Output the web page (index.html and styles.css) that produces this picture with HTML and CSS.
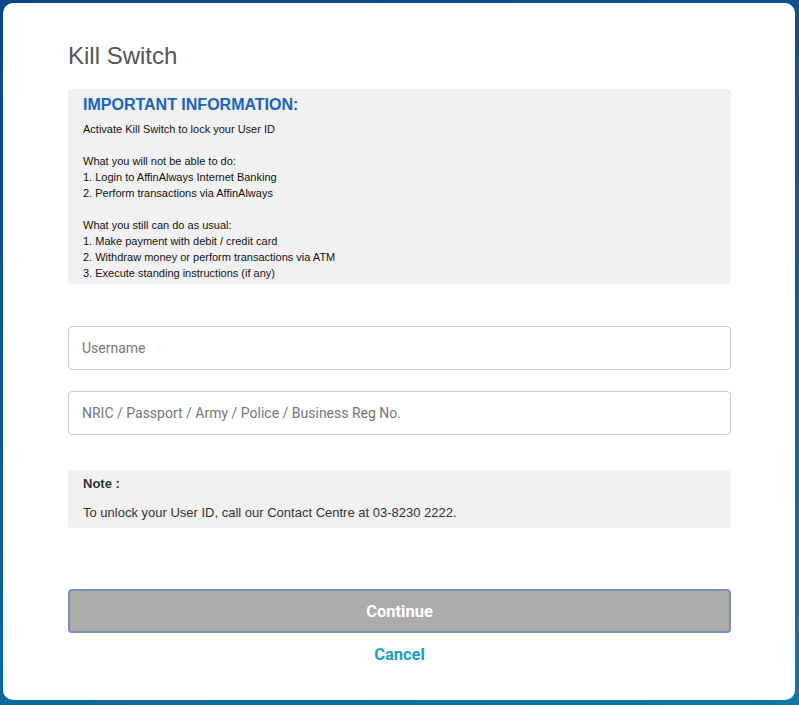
FILE: index.html
```html
<!DOCTYPE html>
<html lang="en">
<head>
  <meta charset="UTF-8" />
  <meta name="viewport" content="width=device-width, initial-scale=1.0"/>
  <title>Kill Switch</title>
  <link rel="stylesheet" href="styles.css">
</head>
<body>

<div class="modal">
  <h1>Kill Switch</h1>

  <div class="info">
    <h3>IMPORTANT INFORMATION:</h3>
    <p>Activate Kill Switch to lock your User ID</p>
    <p>What you will not be able to do:<br>
      1. Login to AffinAlways Internet Banking<br>
      2. Perform transactions via AffinAlways</p>
    <p>What you still can do as usual:<br>
      1. Make payment with debit / credit card<br>
      2. Withdraw money or perform transactions via ATM<br>
      3. Execute standing instructions (if any)</p>
  </div>

  <div class="fields">
    <input type="text" id="username" placeholder="Username">
    <input type="text" id="idno" placeholder="NRIC / Passport / Army / Police / Business Reg No.">
  </div>

  <div class="note">
    <div class="note-title">Note :</div>
    <div class="note-text">To unlock your User ID, call our Contact Centre at 03-8230 2222.</div>
  </div>

  <button class="btn" id="continueBtn" disabled>Continue</button>
  <a href="#" class="cancel">Cancel</a>
</div>

</body>
</html>
```

FILE: styles.css
```css
html, body {
  height: 100%;
}

body {
  font-family: 'Liberation Sans', Arial, sans-serif;
  background: linear-gradient(160deg, #0b4585 0%, #0a5c98 50%, #0a7aa8 100%);
  margin: 0;
  padding: 3px 4px 5px 3px;
  box-sizing: border-box;
}

.modal {
  background: #fff;
  border-radius: 10px;
  height: 100%;
  box-sizing: border-box;
  padding: 39px 64px 0 65px;
  display: flex;
  flex-direction: column;
}

.modal h1 {
  font-size: 24px;
  font-weight: normal;
  line-height: 28px;
  color: #555;
  margin: 0 0 19px;
}

.info {
  background: #f1f1f1;
  border-radius: 4px;
  padding: 6px 15px 3px;
  color: #111;
  font-size: 11px;
  line-height: 16px;
}

.info h3 {
  color: #1665c1;
  font-size: 16px;
  line-height: 20px;
  margin: 0 0 6px;
}

.info p {
  margin: 0 0 16px;
}

.info p:last-child {
  margin-bottom: 0;
}

.fields {
  display: flex;
  flex-direction: column;
  gap: 21px;
  margin-top: 42px;
}

.fields input {
  height: 44px;
  box-sizing: border-box;
  border: 1px solid #ccc;
  border-radius: 4px;
  padding: 0 13px;
  font-family: Roboto, sans-serif;
  font-size: 14px;
  color: #333;
  outline: none;
}

.fields input::placeholder {
  color: #777;
}

.note {
  background: #f1f1f1;
  border-radius: 4px;
  margin-top: 35px;
  padding: 6px 15px 7px;
  font-size: 13px;
  color: #333;
}

.note-title {
  font-weight: bold;
  line-height: 16px;
  margin-bottom: 13px;
}

.note-text {
  line-height: 16px;
}

.btn {
  margin-top: 61px;
  height: 44px;
  background: #acacac;
  border: 2px solid #7b90bd;
  border-radius: 4px;
  color: #fff;
  font-family: Roboto, sans-serif;
  font-weight: bold;
  font-size: 16.5px;
}

.cancel {
  margin-top: 12px;
  align-self: center;
  color: #17a2c6;
  font-family: Roboto, sans-serif;
  font-weight: bold;
  font-size: 16.5px;
  line-height: 20px;
  text-decoration: none;
}
```
